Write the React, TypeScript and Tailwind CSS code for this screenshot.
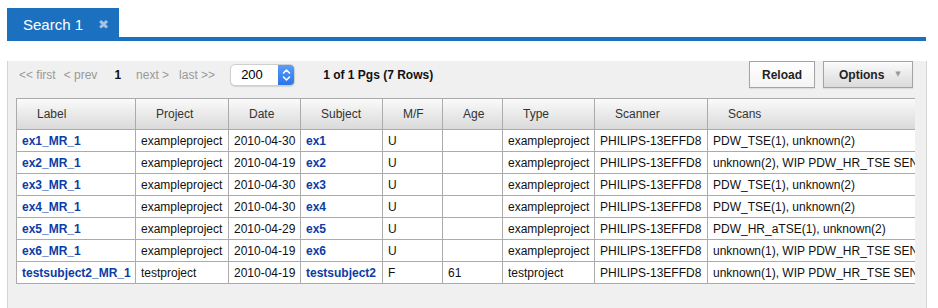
import React from "react";

type Row = {
  label: string;
  project: string;
  date: string;
  subject: string;
  mf: string;
  age: string;
  type: string;
  scanner: string;
  scans: string;
};

const rows: Row[] = [
  { label: "ex1_MR_1", project: "exampleproject", date: "2010-04-30", subject: "ex1", mf: "U", age: "", type: "exampleproject", scanner: "PHILIPS-13EFFD8", scans: "PDW_TSE(1), unknown(2)" },
  { label: "ex2_MR_1", project: "exampleproject", date: "2010-04-19", subject: "ex2", mf: "U", age: "", type: "exampleproject", scanner: "PHILIPS-13EFFD8", scans: "unknown(2), WIP PDW_HR_TSE SENSE(1)" },
  { label: "ex3_MR_1", project: "exampleproject", date: "2010-04-30", subject: "ex3", mf: "U", age: "", type: "exampleproject", scanner: "PHILIPS-13EFFD8", scans: "PDW_TSE(1), unknown(2)" },
  { label: "ex4_MR_1", project: "exampleproject", date: "2010-04-30", subject: "ex4", mf: "U", age: "", type: "exampleproject", scanner: "PHILIPS-13EFFD8", scans: "PDW_TSE(1), unknown(2)" },
  { label: "ex5_MR_1", project: "exampleproject", date: "2010-04-29", subject: "ex5", mf: "U", age: "", type: "exampleproject", scanner: "PHILIPS-13EFFD8", scans: "PDW_HR_aTSE(1), unknown(2)" },
  { label: "ex6_MR_1", project: "exampleproject", date: "2010-04-19", subject: "ex6", mf: "U", age: "", type: "exampleproject", scanner: "PHILIPS-13EFFD8", scans: "unknown(1), WIP PDW_HR_TSE SENSE(2)" },
  { label: "testsubject2_MR_1", project: "testproject", date: "2010-04-19", subject: "testsubject2", mf: "F", age: "61", type: "testproject", scanner: "PHILIPS-13EFFD8", scans: "unknown(1), WIP PDW_HR_TSE SENSE(2)" },
];

const headers = ["Label", "Project", "Date", "Subject", "M/F", "Age", "Type", "Scanner", "Scans"];

export default function App() {
  return (
    <div className="relative w-[938px] h-[308px] bg-white overflow-hidden text-[12px] text-[#111]" style={{ fontFamily: '"Liberation Sans", Arial, Helvetica, sans-serif' }}>
      {/* Tab strip */}
      <div className="pl-[7px] pt-[8px] flex">
        <div className="w-[112px] h-[29px] bg-[#1b70bf] flex items-center pl-[16px] pt-[4px]">
          <span className="text-white text-[15px] leading-none">Search 1</span>
          <span className="ml-[15px] text-[#a7c3e3] text-[13px] leading-none" style={{ fontFamily: '"DejaVu Sans", sans-serif' }}>✖</span>
        </div>
      </div>
      <div className="ml-[7px] w-[919px] h-[4px] bg-[#1b70bf]" />

      {/* Panel */}
      <div className="ml-[7px] w-[920px] h-[267px] bg-[#f0f0f0] border-l border-r border-[#d4d4d4]">
        {/* Controls */}
        <div className="flex items-center h-[27px] mt-[20px] pl-[11px] pr-[13px]">
          <span className="text-[#999]">&lt;&lt; first</span>
          <span className="text-[#999] ml-[8px]">&lt; prev</span>
          <span className="font-bold ml-[17px]">1</span>
          <span className="text-[#999] ml-[15px]">next &gt;</span>
          <span className="text-[#999] ml-[10px]">last &gt;&gt;</span>
          <div className="ml-[15px] w-[65px] h-[22px] bg-white rounded-[5px] border border-[#cfcfcf] shadow-[0_1px_1px_rgba(0,0,0,0.12)] flex items-stretch overflow-hidden">
            <span className="flex-1 flex items-center pl-[10px] text-[13px] text-black">200</span>
            <span className="w-[16px] bg-gradient-to-b from-[#5a9cf8] to-[#2a74ec] flex items-center justify-center">
              <svg width="9" height="14" viewBox="0 0 9 14" fill="none" stroke="white" strokeWidth="1.6" strokeLinecap="round" strokeLinejoin="round">
                <path d="M1.5 5 L4.5 2 L7.5 5" />
                <path d="M1.5 9 L4.5 12 L7.5 9" />
              </svg>
            </span>
          </div>
          <span className="font-bold ml-[28px]">1 of 1 Pgs (7 Rows)</span>
          <div className="flex-1" />
          <button className="w-[66px] h-[27px] border border-[#a4a4a4] bg-gradient-to-b from-white to-[#f4f4f4] font-bold text-[12px] text-[#222] shadow-[0_1px_1px_rgba(0,0,0,0.08)]">
            Reload
          </button>
          <button className="ml-[8px] w-[90px] h-[27px] border border-[#a4a4a4] bg-gradient-to-b from-[#fbfbfb] to-[#dadada] font-bold text-[12px] text-[#222] flex items-center pl-[15px] shadow-[0_1px_1px_rgba(0,0,0,0.08)]">
            <span>Options</span>
            <span className="ml-[11px] text-[7px] text-[#9a9a9a]" style={{ fontFamily: '"DejaVu Sans", sans-serif' }}>▼</span>
          </button>
        </div>

        {/* Table */}
        <div className="ml-[8px] mt-[10px] w-[899px] overflow-hidden">
          <table className="table-fixed border-collapse w-[1000px]">
            <colgroup>
              <col className="w-[119px]" />
              <col className="w-[93px]" />
              <col className="w-[72px]" />
              <col className="w-[82px]" />
              <col className="w-[60px]" />
              <col className="w-[60px]" />
              <col className="w-[92px]" />
              <col className="w-[113px]" />
              <col className="w-[309px]" />
            </colgroup>
            <thead>
              <tr className="h-[31px] bg-gradient-to-b from-[#fafafa] to-[#d9d9d9]">
                {headers.map((h) => (
                  <th key={h} className="border border-[#ababab] text-left font-normal text-[#333] pl-[20px] whitespace-nowrap">
                    {h}
                  </th>
                ))}
              </tr>
            </thead>
            <tbody>
              {rows.map((r) => (
                <tr key={r.label} className="h-[22px] bg-white">
                  <td className="border border-[#ababab] px-[5px] font-bold text-[#0c3ca6] whitespace-nowrap">{r.label}</td>
                  <td className="border border-[#ababab] px-[5px] whitespace-nowrap">{r.project}</td>
                  <td className="border border-[#ababab] px-[5px] whitespace-nowrap">{r.date}</td>
                  <td className="border border-[#ababab] px-[5px] font-bold text-[#0c3ca6] whitespace-nowrap">{r.subject}</td>
                  <td className="border border-[#ababab] px-[5px] whitespace-nowrap">{r.mf}</td>
                  <td className="border border-[#ababab] px-[5px] whitespace-nowrap">{r.age}</td>
                  <td className="border border-[#ababab] px-[5px] whitespace-nowrap">{r.type}</td>
                  <td className="border border-[#ababab] px-[5px] whitespace-nowrap">{r.scanner}</td>
                  <td className="border border-[#ababab] px-[5px] whitespace-nowrap overflow-hidden">{r.scans}</td>
                </tr>
              ))}
            </tbody>
          </table>
        </div>
      </div>
    </div>
  );
}
